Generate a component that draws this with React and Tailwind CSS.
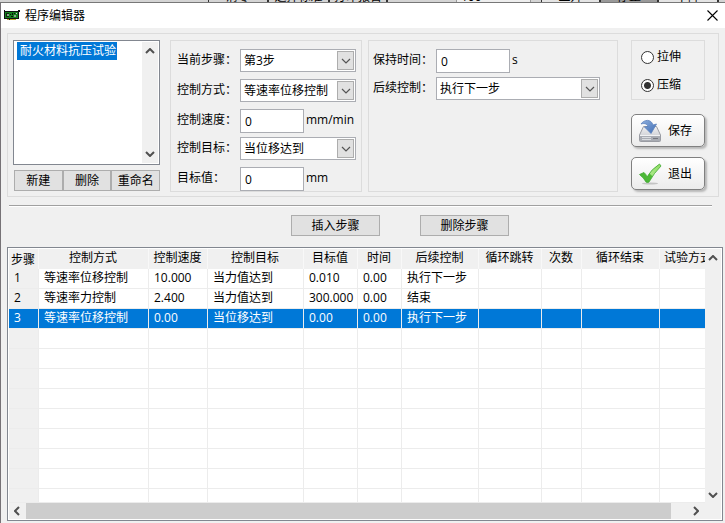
import { useState } from "react";

const programs = ["耐火材料抗压试验"];

const columns = [
  { title: "步骤", width: "w-[30px]" },
  { title: "控制方式", width: "w-[110px]" },
  { title: "控制速度", width: "w-[59px]" },
  { title: "控制目标", width: "w-24" },
  { title: "目标值", width: "w-[54px]" },
  { title: "时间", width: "w-11" },
  { title: "后续控制", width: "w-[77px]" },
  { title: "循环跳转", width: "w-[63px]" },
  { title: "次数", width: "w-10" },
  { title: "循环结束", width: "w-[78px]" },
  { title: "试验方式", width: "" },
];

const steps = [
  ["1", "等速率位移控制", "10.000", "当力值达到", "0.010", "0.00", "执行下一步", "", "", "", ""],
  ["2", "等速率力控制", "2.400", "当力值达到", "300.000", "0.00", "结束", "", "", "", ""],
  ["3", "等速率位移控制", "0.00", "当位移达到", "0.00", "0.00", "执行下一步", "", "", "", ""],
];

const emptyRows = Array.from({ length: 9 }, () => columns.map(() => ""));

const Chevron = ({ className = "", thin }) => (
  <svg className={className} width="10" height="6" viewBox="0 0 10 6" fill="none" stroke={thin ? "#555" : "#505050"} strokeWidth={thin ? 1.2 : 2}>
    <path d="M1 1l4 4 4-4" />
  </svg>
);

const Field = ({ id, label, unit, children }) => (
  <div className="flex items-start">
    <label htmlFor={id} className="w-[63px] shrink-0 leading-[22px] whitespace-nowrap">{label}</label>
    {children}
    {unit && <span className="ml-0.5 leading-[22px]">{unit}</span>}
  </div>
);

const Select = ({ id, options, className }) => (
  <div className={`relative ${className}`}>
    <select id={id} className="h-[23px] w-full appearance-none border border-[#abadb3] bg-white pl-[3px] text-black outline-none">
      {options.map((o) => (
        <option key={o}>{o}</option>
      ))}
    </select>
    <span className="pointer-events-none absolute top-0.5 right-0.5 flex h-[19px] w-[17px] items-center justify-center border border-[#adadad] bg-[#e1e1e1]">
      <Chevron thin />
    </span>
  </div>
);

const TextBox = ({ id, className }) => (
  <input id={id} type="text" defaultValue="0" className={`h-6 border border-[#abadb3] bg-white pl-1 outline-none ${className}`} />
);

const Button = ({ className = "", children }) => (
  <button type="button" className={`h-[21px] border border-[#adadad] bg-[#e1e1e1] leading-4 whitespace-nowrap hover:bg-[#e5f1fb] ${className}`}>
    {children}
  </button>
);

const IconButton = ({ icon, children }) => (
  <button type="button" className="flex h-[33px] w-[74px] items-center gap-1.5 rounded-[5px] border border-[#808080] bg-gradient-to-b from-white to-[#ececec] pl-1.5 shadow-[2px_2px_2px_#b8b8b8]">
    {icon}
    {children}
  </button>
);

const BoardIcon = () => (
  <svg width="16" height="11" viewBox="0 0 16 11">
    <path d="M0 0h1v1h13v-1h2v2h-1v7h-5v1H3V9H0z" fill="#111" />
    <rect x="1" y="2" width="13" height="6" fill="#14801c" />
    <path d="M2 3h3v4H2z" fill="#0c2c0c" />
    <path d="M3 4h2v2H3zM10 5h2v2h-2z" fill="#8fa08f" />
    <path d="M6 4h1v1H6zM8 3h1v2H8zM7 6h2v1H7zM10 3h1v1h-1z" fill="#0c0c0c" />
    <path d="M3 9h2v1H3zM6 9h6v1H6z" fill="#b9a22a" />
    <path d="M12 3h1v1h-1z" fill="#c8c8c8" />
  </svg>
);

const DriveIcon = () => (
  <svg width="24" height="24" viewBox="0 0 24 24">
    <defs>
      <linearGradient id="drive" x1="0" y1="0" x2="0" y2="1">
        <stop offset="0" stopColor="#f0f0f2" />
        <stop offset="1" stopColor="#c0c2c8" />
      </linearGradient>
      <linearGradient id="arrow" x1="0" y1="0" x2="1" y2="1">
        <stop offset="0" stopColor="#8fb0de" />
        <stop offset="1" stopColor="#3f6db5" />
      </linearGradient>
    </defs>
    <path d="M5.500 7.500h13l4 8.500v5.500q0 1-1 1h-19q-1 0-1-1V16z" fill="url(#drive)" stroke="#9a9ca3" />
    <path d="M2 16.500h20v5.500H2z" fill="#a9acb3" />
    <path d="M2 16.500h20" stroke="#f1f2f4" />
    <path d="M4 18.500h9M4 20.500h9" stroke="#d9dbdf" />
    <path d="M15 19.500h5" stroke="#74777f" />
    <path d="M3 5C6 .5 13-.5 15 6l3.500-1L13 14.500 6.500 8l3.500-.5C9 4.500 6 4 3 5z" fill="url(#arrow)" stroke="#5a80bd" strokeWidth=".8" />
  </svg>
);

const CheckIcon = () => (
  <svg width="24" height="24" viewBox="0 0 24 24">
    <defs>
      <linearGradient id="check" x1="1" y1="0" x2="0" y2="1">
        <stop offset="0" stopColor="#8fdc62" />
        <stop offset=".5" stopColor="#a9e886" />
        <stop offset=".55" stopColor="#4fbb35" />
        <stop offset="1" stopColor="#49b43a" />
      </linearGradient>
    </defs>
    <ellipse cx="12" cy="21.500" rx="8" ry="1" fill="#c4c4c4" />
    <path d="M1.500 12.500L6 10.500q2 1.500 3 4.500Q13 7.500 21.500 2L23 4Q16 11 11 20q-1.500 1-3 0Q6 16 1.500 12.500z" fill="url(#check)" stroke="#3fa831" strokeWidth=".8" />
  </svg>
);

const StepTable = () => {
  const [selected, setSelected] = useState(2);

  return (
    <table className="w-full table-fixed border-separate border-spacing-0">
      <thead>
        <tr className="h-5">
          {columns.map((c) => (
            <th key={c.title} scope="col" className={`overflow-hidden border-r border-[#f8f8f8] bg-[#f0f0f0] p-0 pr-px text-center align-top leading-[18px] font-normal whitespace-nowrap first:align-bottom last:border-r-0 last:pl-1 last:text-left ${c.width}`}>
              {c.title}
            </th>
          ))}
        </tr>
      </thead>
      <tbody>
        {[...steps, ...emptyRows].map((row, i) => {
          const isSelected = i === selected;
          return (
            <tr
              key={i}
              onClick={() => i < steps.length && setSelected(i)}
              className={`h-5 last:h-3.5 ${isSelected ? "bg-[#0078d7] text-white" : "bg-white"}`}
            >
              {row.map((cell, j) => (
                <td
                  key={j}
                  className={`overflow-hidden border-r border-b border-[#ececec] p-0 pl-[5px] align-top leading-[18px] whitespace-nowrap last:border-r-0 ${j === 0 && !isSelected ? "bg-[#f0f0f0]" : ""}`}
                >
                  {cell}
                </td>
              ))}
            </tr>
          );
        })}
      </tbody>
    </table>
  );
};

// Bottom edge of the main window's toolbar, left showing above the dialog
const ToolbarEdge = () => (
  <div aria-hidden="true" className="flex h-[3px] items-end justify-end overflow-hidden border-b border-[#777] bg-[#d4d4d4] text-center leading-[10px] whitespace-nowrap">
    <span className="w-[59px] border-l border-[#333]">清零</span>
    <span className="w-[61px] border-l-2 border-[#333]">选择标准</span>
    <span className="w-[60px] border-x-2 border-[#333]">打印报告</span>
    <span className="mr-2.5 ml-[68px] w-[75px] border-x border-[#999] bg-[#eee] pl-1 text-left">100</span>
    <span className="w-[58px] border-l border-[#333] bg-[#e4e4e4]">上升</span>
    <span className="w-[60px] border-x-2 border-[#333] bg-[#999]">停止</span>
    <span className="mr-1.5 w-[60px] border-r-2 border-[#333] bg-[#e4e4e4]">下降</span>
  </div>
);

function App() {
  const [mode, setMode] = useState("压缩");

  return (
    <div lang="zh-CN" className="flex min-h-screen flex-col bg-[#f0f0f0] font-['Open_Sans','Noto_Sans_CJK_SC',sans-serif] text-xs text-black">
      <ToolbarEdge />

      <div className="flex flex-1 flex-col border-l border-[#767276]">
        {/* Title bar */}
        <header className="flex h-[25px] items-center bg-white pr-[7px] pl-[3px]">
          <BoardIcon />
          <h1 className="ml-[5px] leading-5">程序编辑器</h1>
          <button type="button" aria-label="关闭" className="ml-auto">
            <svg width="11" height="11" viewBox="0 0 11 11" stroke="#000" strokeWidth="1.100">
              <path d="M.5.5l10 10M10.500.5l-10 10" />
            </svg>
          </button>
        </header>

        <main className="flex flex-1 flex-col pt-[5px] pr-0.5 pb-0.5 pl-1.5">
          {/* Step settings */}
          <section className="mr-1 flex items-start border border-[#dcdcdc] pt-1.5 pr-[13px] pb-1 pl-[5px]">
            <div className="w-[147px] shrink-0">
              <div className="flex h-[125px] border border-[#828790] bg-white">
                <ul role="listbox" aria-label="程序" className="flex-1 pt-px pl-[3px]">
                  {programs.map((name) => (
                    <li key={name} role="option" aria-selected="true" className="w-[100px] bg-[#0078d7] pl-[3px] leading-[18px] whitespace-nowrap text-white">
                      {name}
                    </li>
                  ))}
                </ul>
                <div className="m-px flex w-4 flex-col items-center justify-between bg-[#f0f0f0] py-1.5">
                  <Chevron className="rotate-180" />
                  <Chevron />
                </div>
              </div>
              <div className="mt-[5px] grid grid-cols-3 pl-px">
                <Button>新建</Button>
                <Button>删除</Button>
                <Button>重命名</Button>
              </div>
            </div>

            <div className="ml-2.5 flex w-48 shrink-0 flex-col gap-1 border border-[#dcdcdc] pt-2 pl-1.5">
              <div className="flex flex-col gap-[7px]">
                <Field id="step" label="当前步骤：">
                  <Select id="step" options={["第3步", "第2步", "第1步"]} className="w-[116px]" />
                </Field>
                <Field id="method" label="控制方式：">
                  <Select id="method" options={["等速率位移控制", "等速率力控制"]} className="w-[116px]" />
                </Field>
                <Field id="speed" label="控制速度：" unit="mm/min">
                  <TextBox id="speed" className="w-16" />
                </Field>
              </div>
              <div className="flex flex-col gap-[7px]">
                <Field id="target" label="控制目标：">
                  <Select id="target" options={["当位移达到", "当力值达到"]} className="w-[116px]" />
                </Field>
                <Field id="value" label="目标值：" unit="mm">
                  <TextBox id="value" className="w-16" />
                </Field>
              </div>
            </div>

            <div className="ml-1.5 flex min-w-0 flex-1 flex-col gap-1 self-stretch border border-[#dcdcdc] pt-2 pl-1">
              <Field id="hold" label="保持时间：" unit="s">
                <TextBox id="hold" className="w-[74px]" />
              </Field>
              <Field id="next" label="后续控制：">
                <Select id="next" options={["执行下一步", "结束"]} className="w-[164px]" />
              </Field>
            </div>

            <div className="ml-[13px] flex w-[74px] shrink-0 flex-col">
              <div className="mb-3.5 flex flex-col gap-2 border border-[#dcdcdc] pt-1.5 pb-1 pl-[9px]">
                {["拉伸", "压缩"].map((m) => (
                  <label key={m} className="flex items-center gap-[3px] leading-5">
                    <input
                      type="radio"
                      name="mode"
                      checked={mode === m}
                      onChange={() => setMode(m)}
                      className="h-[13px] w-[13px] appearance-none rounded-full border border-[#333] bg-white checked:bg-[radial-gradient(circle,#333_3px,#fff_4px)]"
                    />
                    {m}
                  </label>
                ))}
              </div>
              <div className="flex flex-col gap-[10px]">
                <IconButton icon={<DriveIcon />}>保存</IconButton>
                <IconButton icon={<CheckIcon />}>退出</IconButton>
              </div>
            </div>
          </section>

          <hr className="mt-2 mr-[11px] ml-0.5 border-t border-[#a0a0a0] shadow-[0_1px_0_#fff]" />

          <div className="mt-[9px] mb-[11px] flex justify-center gap-10 pl-[70px]">
            <Button className="w-[89px]">插入步骤</Button>
            <Button className="w-[89px]">删除步骤</Button>
          </div>

          {/* Step list */}
          <section className="flex flex-1 border border-[#828790] bg-white p-px">
            <div className="min-w-0 flex-1">
              <StepTable />
              <div className="flex h-4 items-center bg-[#f0f0f0]">
                <Chevron className="mx-[3px] rotate-90" />
                <div className="ml-px h-full flex-1 bg-[#cdcdcd]" />
                <Chevron className="mr-1 ml-5 -rotate-90" />
              </div>
            </div>
            <div className="flex w-4 flex-col items-center justify-between bg-[#f0f0f0] pt-1.5 pb-[21px]">
              <Chevron className="rotate-180" />
              <Chevron />
            </div>
          </section>
        </main>
      </div>
    </div>
  );
}

export default App;
